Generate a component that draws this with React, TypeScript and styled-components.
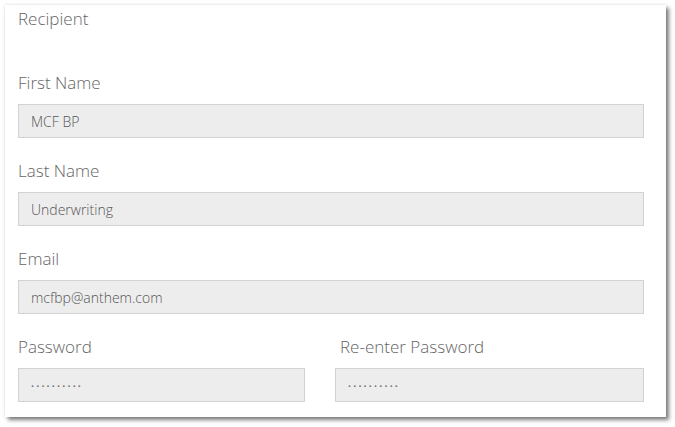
import React from 'react';
import styled, { createGlobalStyle } from 'styled-components';

const GlobalStyle = createGlobalStyle`
  html, body {
    margin: 0;
    padding: 0;
    background: #ffffff;
    font-family: 'Open Sans', 'Liberation Sans', sans-serif;
  }
`;

const Page = styled.div`
  box-sizing: border-box;
  min-height: 100vh;
  padding: 5px 0 0 5px;
`;

const Card = styled.section`
  box-sizing: border-box;
  width: 661px;
  padding: 3px 22px 15px 13px;
  background: #ffffff;
  box-shadow: 3px 3px 4px rgba(0, 0, 0, 0.5), 0 0 3px rgba(0, 0, 0, 0.12);
`;

const Heading = styled.h3`
  margin: 0 0 42px;
  font-size: 17px;
  line-height: 22px;
  font-weight: 300;
  color: #666666;
`;

const Group = styled.div`
  display: flex;
  flex-direction: column;
  margin-bottom: 22px;
`;

const Row = styled.div`
  display: grid;
  grid-template-columns: 287px 1fr;
  column-gap: 30px;

  ${Group} {
    margin-bottom: 0;
  }
`;

const Label = styled.label<{ $indent?: number }>`
  font-size: 17px;
  line-height: 22px;
  font-weight: 300;
  color: #666666;
  margin-bottom: 10px;
  padding-left: ${(p) => p.$indent ?? 0}px;
`;

const Field = styled.input<{ $secret?: boolean }>`
  box-sizing: border-box;
  width: 100%;
  height: 34px;
  margin: 0;
  padding: 0 12px;
  border: 1px solid #d2d2d2;
  border-radius: 0;
  background: #ededed;
  font-family: 'Open Sans', 'Liberation Sans', sans-serif;
  font-size: ${(p) => (p.$secret ? '8px' : '14px')};
  font-weight: ${(p) => (p.$secret ? 400 : 300)};
  letter-spacing: ${(p) => (p.$secret ? '2.2px' : '0')};
  color: ${(p) => (p.$secret ? '#777777' : '#555555')};
  outline: none;
`;

const fields = [
  { label: 'First Name', value: 'MCF BP' },
  { label: 'Last Name', value: 'Underwriting' },
  { label: 'Email', value: 'mcfbp@anthem.com' },
];

export default function App() {
  return (
    <Page>
      <GlobalStyle />
      <Card>
        <Heading>Recipient</Heading>
        {fields.map((f) => (
          <Group key={f.label}>
            <Label>{f.label}</Label>
            <Field readOnly value={f.value} />
          </Group>
        ))}
        <Row>
          <Group>
            <Label>Password</Label>
            <Field $secret readOnly value="••••••••••" />
          </Group>
          <Group>
            <Label $indent={5}>Re-enter Password</Label>
            <Field $secret readOnly value="••••••••••" />
          </Group>
        </Row>
      </Card>
    </Page>
  );
}
